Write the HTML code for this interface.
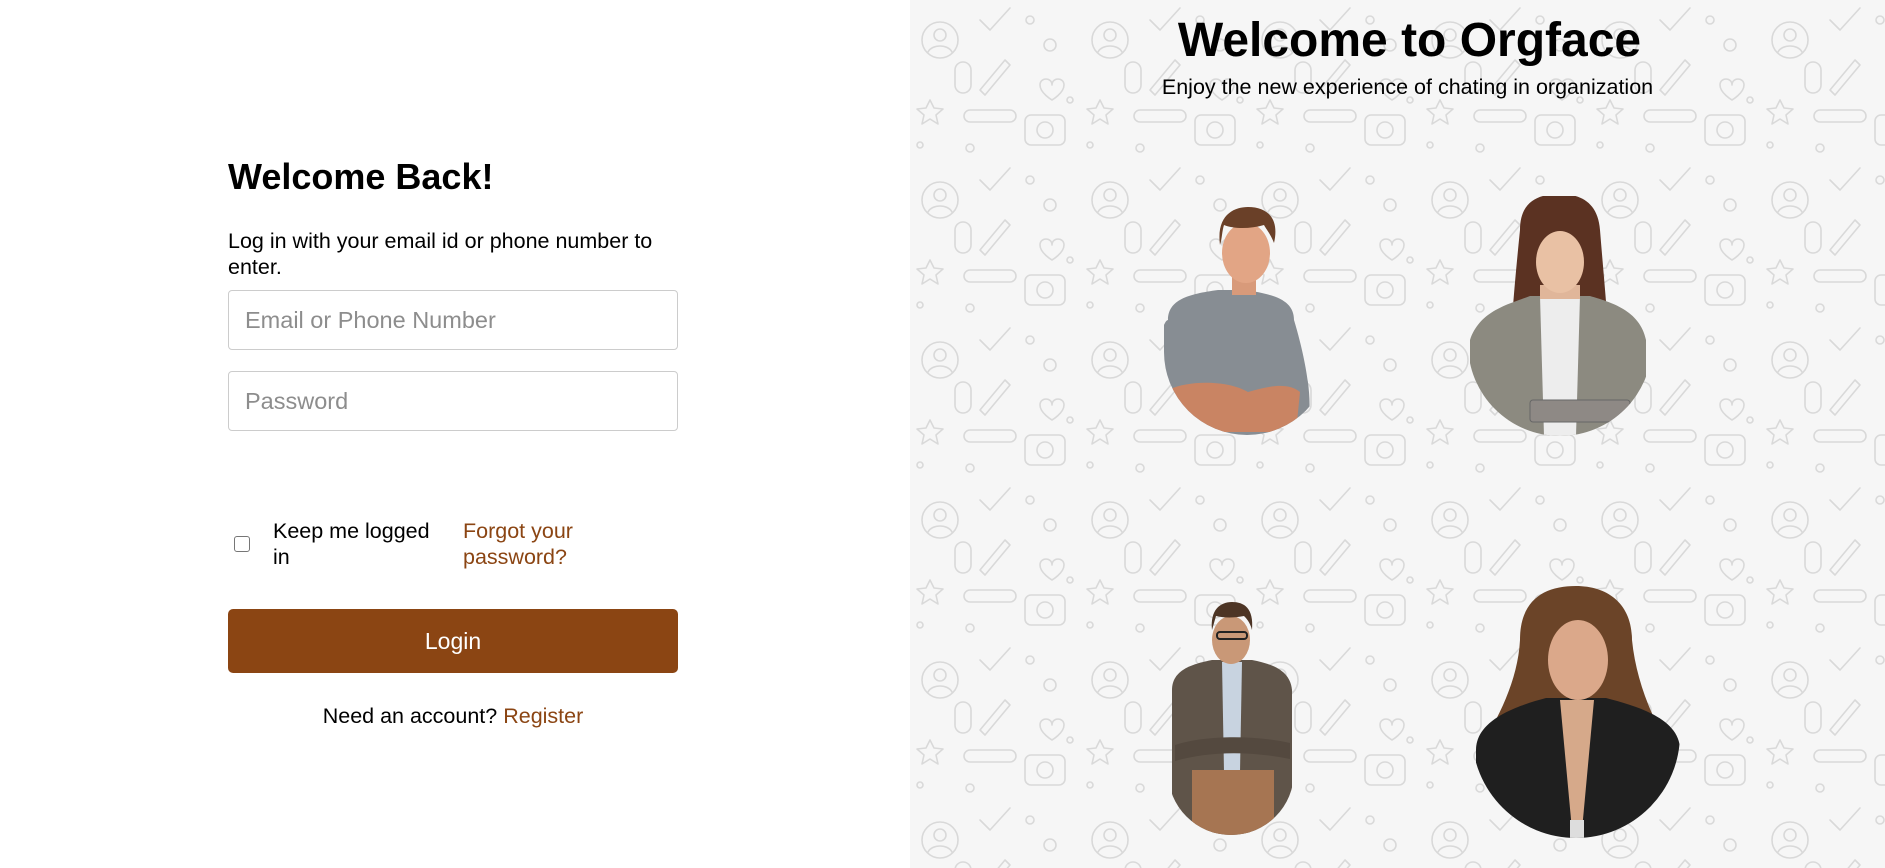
<!DOCTYPE html>
<html><head><meta charset="utf-8">
<style>
*{margin:0;padding:0;box-sizing:border-box}
html,body{width:1885px;height:868px;overflow:hidden;background:#fff;font-family:"Liberation Sans",Arial,sans-serif;color:#000}
.left{position:absolute;left:0;top:0;width:910px;height:868px;background:#fff}
.form{position:absolute;left:228px;top:0;width:450px}
h1{position:absolute;top:156px;left:0;font-size:36px;font-weight:bold;white-space:nowrap}
.sub{position:absolute;top:228px;left:0;width:450px;font-size:21.5px;line-height:26px;padding-right:4px}
.inp{position:absolute;left:0;width:450px;height:60px;border:1px solid #ccc;border-radius:4px;font-size:23.5px;color:#8d8d8d;padding-left:16px;line-height:58px}
.cb{position:absolute;left:6px;width:16px;height:16px;border:1.5px solid #767676;border-radius:3px}
.keep{position:absolute;left:45px;top:518px;font-size:21.5px;line-height:26px;width:165px}
.forgot{position:absolute;left:235px;top:518px;font-size:21.5px;line-height:26px;color:#8b4513;width:150px}
.btn{position:absolute;left:0;top:609px;width:450px;height:64px;}
.btn div{position:absolute;left:0;top:0;width:450px;height:64px;background:#8b4513;border-radius:5px;color:#fff;font-size:23px;text-align:center;line-height:64px}
.need{position:absolute;left:0;top:704px;width:450px;text-align:center;font-size:21.5px}
.need span{color:#8b4513}
.right{position:absolute;left:910px;top:0;width:975px;height:868px;background:#f6f6f6;overflow:hidden}
.right svg.bg{position:absolute;left:0;top:0}
.h2{position:absolute;left:12px;width:975px;top:13px;text-align:center;font-size:48px;font-weight:bold}
.p{position:absolute;left:10px;width:975px;top:75px;text-align:center;font-size:21.5px}
.pp{position:absolute;left:0;top:0}
</style></head><body>
<div class="left">
 <div class="form">
  <h1>Welcome Back!</h1>
  <div class="sub">Log in with your email id or phone number to enter.</div>
  <div class="inp" style="top:290px">Email or Phone Number</div>
  <div class="inp" style="top:371px">Password</div>
  <div class="cb" style="top:536px"></div>
  <div class="keep">Keep me logged in</div>
  <div class="forgot">Forgot your password?</div>
  <div class="btn"><div>Login</div></div>
  <div class="need">Need an account? <span>Register</span></div>
 </div>
</div>
<div class="right">
 <svg class="bg" width="975" height="868">
  <defs>
   <pattern id="pt" width="170" height="160" patternUnits="userSpaceOnUse">
    <g fill="none" stroke="#d9d9d9" stroke-width="1.6" stroke-linecap="round" stroke-linejoin="round">
     <circle cx="30" cy="40" r="18"/><circle cx="30" cy="35" r="6"/><path d="M18 52c4-8 20-8 24 0"/>
     <path d="M70 20l10 10l20-22"/><circle cx="120" cy="20" r="4"/><circle cx="140" cy="45" r="6"/>
     <path d="M95 60l-25 30l5 5l25-30z"/><path d="M60 110h40a6 6 0 0 1 0 12h-40a6 6 0 0 1 0-12z"/>
     <path d="M20 100l4 8l9 1l-7 6l2 9l-8-5l-8 5l2-9l-7-6l9-1z"/>
     <path d="M130 85c0-8 12-8 12 0c0-8 12-8 12 0c0 8-12 15-12 15s-12-7-12-15z"/>
     <rect x="115" y="115" width="40" height="30" rx="6"/><circle cx="135" cy="130" r="8"/>
     <circle cx="60" cy="148" r="4"/><circle cx="10" cy="145" r="3"/><circle cx="160" cy="100" r="3"/>
     <path d="M45 70v15a8 8 0 0 0 16 0v-15a8 8 0 0 0-16 0z"/>
    </g>
   </pattern>
  </defs>
  <rect width="975" height="868" fill="url(#pt)"/>
 </svg>
 <div class="h2">Welcome to Orgface</div>
 <div class="p">Enjoy the new experience of chating in organization</div>
 <svg class="pp" width="975" height="868">
  <defs>
   <clipPath id="c1"><path d="M254 206H420V352A83 83 0 0 1 254 352Z"/></clipPath>
   <clipPath id="c2"><path d="M558 196H742V344A92 92 0 0 1 558 344Z"/></clipPath>
   <clipPath id="c3"><path d="M258 590H384V772A62 62 0 0 1 258 772Z"/></clipPath>
   <clipPath id="c4"><path d="M562 584H770V734A104 104 0 0 1 562 734Z"/></clipPath>
  </defs>
  <g clip-path="url(#c1)">
   <path d="M258 320c0-20 20-26 50-30h26c30 4 50 10 50 30 0 0 35 110 0 120h-126c-30 0-10-120 0-120z" fill="#878d93"/>
   <path d="M258 390c20-10 60-10 80 2c20-6 40-10 52 0l-4 40h-128z" fill="#c98463"/>
   <rect x="322" y="275" width="24" height="20" fill="#d89a7a"/>
   <ellipse cx="336" cy="253" rx="24" ry="30" fill="#e2a585"/>
   <path d="M310 245c-4-30 14-38 28-38c18 0 32 10 26 36c-4-10-8-14-10-18c-14 4-30 4-40 0c-2 6-2 14-4 20z" fill="#6a4028"/>
  </g>
  <g clip-path="url(#c2)">
   <path d="M610 230c0-30 20-36 40-36s38 8 40 36c4 50 10 110 10 140h-100c0-40 6-100 10-140z" fill="#5b3222"/>
   <path d="M560 340c10-30 40-36 60-44h60c20 6 50 14 56 44v100h-176z" fill="#8c8a80"/>
   <path d="M630 296h40l-4 140h-32z" fill="#ededed"/>
   <rect x="630" y="285" width="40" height="14" fill="#e0b69a"/>
   <ellipse cx="650" cy="262" rx="24" ry="31" fill="#e9c1a4"/>
   <rect x="620" y="400" width="100" height="22" rx="3" fill="#8e8985" stroke="#666"/>
  </g>
  <g clip-path="url(#c3)">
   <path d="M262 690c0-20 20-26 40-30h40c20 4 38 10 40 30v160h-120z" fill="#5f5449"/>
   <path d="M312 662h20l-2 110h-16z" fill="#c8d3e0"/>
   <rect x="282" y="770" width="82" height="80" fill="#a67552"/>
   <path d="M265 745c30-10 80-10 115-2v16c-40-8-80-8-115 2z" fill="#54493f"/>
   <ellipse cx="321" cy="640" rx="19" ry="24" fill="#c99877"/>
   <path d="M302 630c-2-20 8-28 20-28s22 6 20 28c-2-8-6-12-8-14c-10 2-20 2-28 0z" fill="#4d3525"/>
   <rect x="307" y="632" width="30" height="7" rx="3" fill="none" stroke="#222" stroke-width="2"/>
  </g>
  <g clip-path="url(#c4)">
   <path d="M610 640c0-40 24-54 56-54s56 18 56 54c4 40 20 80 40 110h-194c20-30 40-70 42-110z" fill="#6b4428"/>
   <path d="M566 750c0-30 40-44 70-52h60c30 8 74 20 74 52v100h-204z" fill="#1f1f1f"/>
   <path d="M650 700h34l-12 130h-10z" fill="#d6a98a"/>
   <rect x="660" y="820" width="14" height="30" fill="#ddd"/>
   <ellipse cx="668" cy="660" rx="30" ry="40" fill="#dba88a"/>
  </g>
 </svg>
</div>
</body></html>
